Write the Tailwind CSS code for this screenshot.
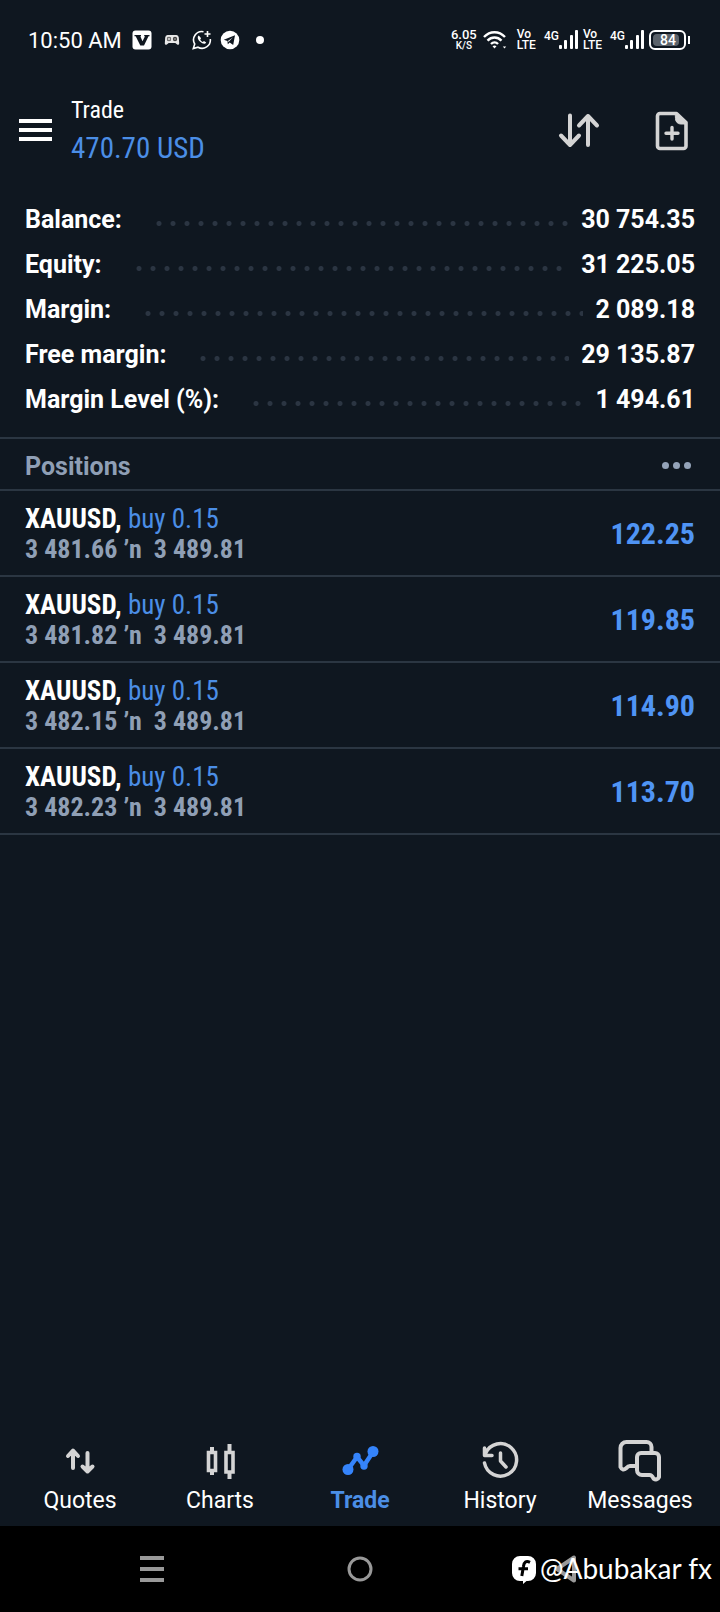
<!DOCTYPE html>
<html lang="en">
<head>
<meta charset="utf-8">
<meta name="viewport" content="width=device-width, initial-scale=1">
<title>Trade</title>
<script src="https://cdn.jsdelivr.net/npm/@tailwindcss/browser@4"></script>
</head>
<body class="flex min-h-screen flex-col bg-[#0f1720] font-['Roboto',sans-serif] text-white">

<div class="flex h-20 items-center justify-between pr-[30px] pl-7">
  <div class="flex items-center">
    <span class="pt-0.5 text-[22px] leading-7">10:50 AM</span>
    <svg class="ml-2.5 size-5" viewBox="0 0 20 20"><rect width="19" height="19" x=".5" y=".5" rx="3" fill="#fff"/><path d="M2.500 5h6.500v1.300h-.7l2.200 5 2.500-5h-.8V5h5.300v1.300h-1L12 15.600H8.300L3.700 6.300H2.500z" fill="#0f1720"/></svg>
    <svg class="ml-3 h-3 w-4" viewBox="0 0 16 12"><path d="M3.500 1h9q2 0 2.300 2.500l.4 6q-.2 1.800-1.700 1.200L11.300 9H4.700l-2.200 1.700Q1 11.300.8 9.500l.4-6Q1.500 1 3.500 1z" fill="#e8e8e8"/><circle cx="5" cy="5" r="2.200" fill="#444"/><circle cx="11" cy="5" r="2.200" fill="#444"/><path d="M5 3.500v3M3.500 5h3" stroke="#eee"/><circle cx="11" cy="5" r=".8" fill="#bbb"/></svg>
    <svg class="ml-3 size-5" viewBox="0 0 20 20" fill="none" stroke="#fff"><path d="M11.500 1.700A8.300 8.300 0 0 0 2.700 14L1.300 18.500l4.700-1.300A8.300 8.300 0 0 0 18.300 9" stroke-width="1.600"/><path d="M15.500 1v6M12.500 4h6" stroke-width="1.600"/><path d="M6.800 5.500c-2 1.400-.9 4.300 1.400 6.300 2.300 2.100 4.900 2.800 6 .7l-2.200-1.600-1.300 1c-1.200-.4-2-1.300-2.500-2.500l.9-1.200z" fill="#fff" stroke="none"/></svg>
    <svg class="ml-2 size-5" viewBox="0 0 20 20"><circle cx="10" cy="10" r="9.300" fill="#fff"/><path d="M3.800 9.700 15 5.200l-1.800 9.700-3.500-2.500-1.900 1.900-.4-3.200z" fill="#0f1720"/><path d="m7.500 11.200 5.500-4-4.300 4.600z" fill="#fff"/></svg>
    <span class="ml-4 size-2 rounded-full bg-white"></span>
  </div>
  <div class="flex items-center font-medium">
    <div class="flex flex-col items-center leading-none">
      <span class="text-[13px] leading-3">6.05</span><span class="text-[10px] leading-[10px]">K/S</span>
    </div>
    <svg class="ml-1.5 h-5 w-6" viewBox="0 0 24 20" fill="none" stroke="#fff" stroke-width="2.400"><path d="M1 7C7 .6 16 .6 22 7M4.500 10.600c4-4.100 10-4.100 14 0M8 14c2.200-2.200 5-2.200 7 0"/><path d="M11.500 18.500 9.500 16.300q2-1.700 4 0zM21.500 18.500l-1.700-2h3.400z" fill="#fff" stroke="none"/></svg>
    <div class="ml-2.5 flex flex-col text-xs leading-[11px]"><span>Vo</span><span>LTE</span></div>
    <div class="ml-2 flex h-5 items-start text-xs leading-3"><span>4G</span><svg class="h-5 w-[20px]" viewBox="0 0 20 20" fill="#fff"><rect x="0" y="15" width="3" height="4" rx="1"/><rect x="5" y="10" width="3" height="9" rx="1"/><rect x="11" y="5" width="3" height="14" rx="1"/><rect x="16" y="0" width="3" height="19" rx="1"/></svg></div>
    <div class="ml-1 flex flex-col text-xs leading-[11px]"><span>Vo</span><span>LTE</span></div>
    <div class="ml-2 flex h-5 items-start text-xs leading-3"><span>4G</span><svg class="h-5 w-[20px]" viewBox="0 0 20 20" fill="#fff"><rect x="0" y="15" width="3" height="4" rx="1"/><rect x="5" y="10" width="3" height="9" rx="1"/><rect x="11" y="5" width="3" height="14" rx="1"/><rect x="16" y="0" width="3" height="19" rx="1"/></svg></div>
    <div class="ml-1 flex h-5 w-[37px] rounded-md border-2 border-white p-0.5"><div class="flex w-[26px] items-center justify-center rounded-sm bg-[#5b626a] pl-1 text-sm leading-none">84</div></div>
    <div class="ml-0.5 h-2 w-0.5 bg-white"></div>
  </div>
</div>

<header class="flex h-[110px] items-start pt-3 pr-[26px] pl-[19px]">
  <button aria-label="Menu" class="mt-[23px]"><svg class="h-8 w-[33px]" viewBox="0 0 33 32" fill="#fff"><path d="M0 4h33v4H0zM0 13h33v4H0zM0 22h33v4H0z"/></svg></button>
  <div class="ml-[19px] flex-1 font-['Roboto_Condensed','Liberation_Sans_Narrow',sans-serif]">
    <h1 class="text-2xl leading-9">Trade</h1>
    <p class="pt-0.5 text-[29px] leading-9 text-[#4b8ee6]">470.70 USD</p>
  </div>
  <button aria-label="Sort positions" class="mt-3.5"><svg class="h-12 w-12" viewBox="0 0 48 48" fill="none" stroke="#d4d4d4" stroke-width="4" stroke-linecap="round" stroke-linejoin="round"><path d="M18 9.500v29M9 29.500l9 9.500 9-9.500M36 39V10M27 19.500 36 10l9 9.500"/></svg></button>
  <button aria-label="New order" class="mt-3.5 ml-[46px]"><svg class="h-12 w-12" viewBox="0 0 48 48" fill="none" stroke="#d4d4d4" stroke-linecap="round" stroke-linejoin="round"><path d="M14 7.500h16.500l9.500 9V40a2.500 2.500 0 0 1-2.500 2.500h-23.500a2.500 2.500 0 0 1-2.500-2.500V10a2.500 2.500 0 0 1 2.500-2.500z" stroke-width="3.600"/><path d="M29.500 7.500 41 18h-6.500a5 5 0 0 1-5-5z" fill="#d4d4d4" stroke-width="1"/><path d="M26 21.500v11.500M20 27.300h12" stroke-width="3.400"/></svg></button>
</header>

<main class="flex-1">
  <dl class="flex flex-col px-[25px] pt-[7px] pb-[15px] text-[25px] leading-[45px] font-bold">
    <div class="flex"><dt>Balance:</dt><span class="mt-[24px] mr-[12px] ml-[34px] h-[5px] flex-1 bg-[radial-gradient(circle_at_3px_50%,#2b3542_2px,transparent_3px)] bg-[length:14px_5px] bg-repeat-x"></span><dd>30 754.35</dd></div>
    <div class="flex"><dt>Equity:</dt><span class="mt-[24px] mr-[12px] ml-[34px] h-[5px] flex-1 bg-[radial-gradient(circle_at_3px_50%,#2b3542_2px,transparent_3px)] bg-[length:14px_5px] bg-repeat-x"></span><dd>31 225.05</dd></div>
    <div class="flex"><dt>Margin:</dt><span class="mt-[24px] mr-[12px] ml-[34px] h-[5px] flex-1 bg-[radial-gradient(circle_at_3px_50%,#2b3542_2px,transparent_3px)] bg-[length:14px_5px] bg-repeat-x"></span><dd>2 089.18</dd></div>
    <div class="flex"><dt>Free margin:</dt><span class="mt-[24px] mr-[12px] ml-[34px] h-[5px] flex-1 bg-[radial-gradient(circle_at_3px_50%,#2b3542_2px,transparent_3px)] bg-[length:14px_5px] bg-repeat-x"></span><dd>29 135.87</dd></div>
    <div class="flex"><dt>Margin Level (%):</dt><span class="mt-[24px] mr-[12px] ml-[34px] h-[5px] flex-1 bg-[radial-gradient(circle_at_3px_50%,#2b3542_2px,transparent_3px)] bg-[length:14px_5px] bg-repeat-x"></span><dd>1 494.61</dd></div>
  </dl>

  <section>
    <div class="flex h-[54px] items-center justify-between border-y-2 border-[#2b3642] px-[25px]">
      <h2 class="pt-1.5 text-[25px] leading-8 font-bold text-[#8f9fb5]">Positions</h2>
      <button aria-label="More" class="mt-0.5 mr-1 flex gap-1"><span class="size-[7px] rounded-full bg-[#94a3b8]"></span><span class="size-[7px] rounded-full bg-[#94a3b8]"></span><span class="size-[7px] rounded-full bg-[#94a3b8]"></span></button>
    </div>
    <ul class="font-['Roboto_Condensed','Liberation_Sans_Narrow',sans-serif]">
      <li class="flex h-[86px] items-center justify-between border-b-2 border-[#2b3642] px-[25px]">
        <div class="pt-0.5 text-[27px] leading-[30px] font-bold"><p>XAUUSD, <span class="font-normal text-[#4b8ee6]">buy 0.15</span></p><p class="text-[26px] whitespace-pre text-[#8f9fb5]">3 481.66 ’n  3 489.81</p></div>
        <span class="pt-0.5 text-[30px] leading-9 font-bold text-[#4f94f4]">122.25</span>
      </li>
      <li class="flex h-[86px] items-center justify-between border-b-2 border-[#2b3642] px-[25px]">
        <div class="pt-0.5 text-[27px] leading-[30px] font-bold"><p>XAUUSD, <span class="font-normal text-[#4b8ee6]">buy 0.15</span></p><p class="text-[26px] whitespace-pre text-[#8f9fb5]">3 481.82 ’n  3 489.81</p></div>
        <span class="pt-0.5 text-[30px] leading-9 font-bold text-[#4f94f4]">119.85</span>
      </li>
      <li class="flex h-[86px] items-center justify-between border-b-2 border-[#2b3642] px-[25px]">
        <div class="pt-0.5 text-[27px] leading-[30px] font-bold"><p>XAUUSD, <span class="font-normal text-[#4b8ee6]">buy 0.15</span></p><p class="text-[26px] whitespace-pre text-[#8f9fb5]">3 482.15 ’n  3 489.81</p></div>
        <span class="pt-0.5 text-[30px] leading-9 font-bold text-[#4f94f4]">114.90</span>
      </li>
      <li class="flex h-[86px] items-center justify-between border-b-2 border-[#2b3642] px-[25px]">
        <div class="pt-0.5 text-[27px] leading-[30px] font-bold"><p>XAUUSD, <span class="font-normal text-[#4b8ee6]">buy 0.15</span></p><p class="text-[26px] whitespace-pre text-[#8f9fb5]">3 482.23 ’n  3 489.81</p></div>
        <span class="pt-0.5 text-[30px] leading-9 font-bold text-[#4f94f4]">113.70</span>
      </li>
    </ul>
  </section>
</main>

<nav class="grid grid-cols-5 px-[10px] pb-[9px] text-[23px] leading-8">
  <a href="#quotes" class="flex flex-col items-center"><svg class="mb-px h-12 w-12" viewBox="0 0 48 48" fill="none" stroke="#d4d4d4" stroke-width="4" stroke-linecap="round" stroke-linejoin="round"><path d="M17 32V15M12 20l5-5.500 5 5.500M31.500 17v18M26.500 30.500l5 5 5-5"/></svg>Quotes</a>
  <a href="#charts" class="flex flex-col items-center"><svg class="mb-px h-12 w-12" viewBox="0 0 48 48" fill="none" stroke="#d4d4d4" stroke-width="4"><path d="M12.500 16.500h7v18h-7zM30 16.500h7v19.500h-7z" stroke-width="3.600"/><path d="M16 11v4M16 35v4M33.500 8v7M33.500 37v6" stroke-width="4"/></svg>Charts</a>
  <a href="#trade" aria-current="page" class="flex flex-col items-center font-bold text-[#4b8ee6]"><svg class="mb-px h-12 w-12" viewBox="0 0 48 48" fill="none" stroke="#3584fb" stroke-width="4.500" stroke-linejoin="round"><path d="M12 33.500 21 21l7 8.500 9-13.500"/><g fill="#3584fb" stroke="none"><circle cx="12" cy="33.500" r="5.500"/><circle cx="21" cy="20.500" r="3.700"/><circle cx="28" cy="30" r="3.700"/><circle cx="37" cy="15.500" r="5.500"/></g></svg>Trade</a>
  <a href="#history" class="flex flex-col items-center"><svg class="mb-px h-12 w-12" viewBox="0 0 48 48" fill="none" stroke="#d4d4d4" stroke-width="3.500" stroke-linecap="round" stroke-linejoin="round"><path d="M8.500 27A16.200 16.200 0 1 0 9.500 17.500M8.500 12v7.500H16M24.500 17v8l5.500 6"/></svg>History</a>
  <a href="#messages" class="flex flex-col items-center"><svg class="mb-px h-12 w-12" viewBox="0 0 48 48" fill="none" stroke="#d4d4d4" stroke-width="4" stroke-linecap="round" stroke-linejoin="round"><path d="M19 30h-5q-2 0-3.500 2-4 3.500-6-1V12a6 6 0 0 1 6-6h20a5 5 0 0 1 5 5v5"/><path d="M25 17h14a4 4 0 0 1 4 4v20q-2 4-5.500 1.500-1.500-3.500-4-3.500H26a5 5 0 0 1-5-5V21a4 4 0 0 1 4-4z"/></svg>Messages</a>
</nav>

<footer class="relative grid h-[86px] grid-cols-3 items-center justify-items-center bg-black px-12">
  <button aria-label="Recent apps"><svg class="size-8" viewBox="0 0 32 32" fill="#999"><path d="M4 3h24v4H4zM4 14h24v4H4zM4 25h24v4H4z"/></svg></button>
  <button aria-label="Home"><svg class="size-8" viewBox="0 0 32 32" fill="none" stroke="#999" stroke-width="3"><circle cx="16" cy="16" r="11"/></svg></button>
  <button aria-label="Back"><svg class="size-8" viewBox="0 0 32 32" fill="none" stroke="#999" stroke-width="4" stroke-linejoin="round"><path d="M22 4.500v23L5 16z"/></svg></button>
  <div class="absolute inset-y-0 right-2 flex items-center gap-1 pb-0.5 font-['Lato',sans-serif] text-[28px]">
    <svg class="mt-1 h-7 w-6" viewBox="0 0 24 28"><path d="M8 0h8a8 8 0 0 1 8 8v9a8 8 0 0 1-8 8h-1.500L11 28v-3H8a8 8 0 0 1-8-8V8a8 8 0 0 1 8-8z" fill="#fff"/><path d="M18 6.300c-4-2-6 0-6.500 4L9.800 20M6.500 12.800h9.500" fill="none" stroke="#000" stroke-width="3"/></svg>
    <span>@Abubakar fx</span>
  </div>
</footer>
</body>
</html>
